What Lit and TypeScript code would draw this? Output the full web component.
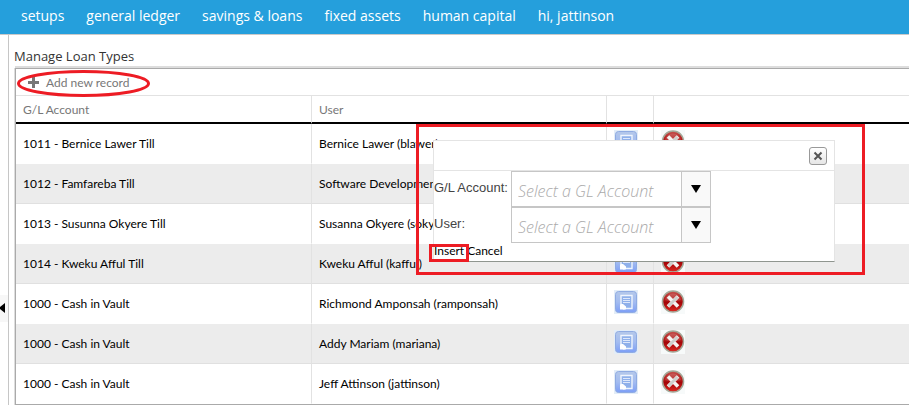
import { LitElement, html, css } from "lit";
import { customElement, property } from "lit/decorators.js";

interface Till {
  account: string;
  user: string;
}

const NAV = ["setups", "general ledger", "savings & loans", "fixed assets", "human capital", "hi, jattinson"];

const TILLS: Till[] = [
  { account: "1011 - Bernice Lawer Till", user: "Bernice Lawer (blawer)" },
  { account: "1012 - Famfareba Till", user: "Software Development" },
  { account: "1013 - Susunna Okyere Till", user: "Susanna Okyere (soky" },
  { account: "1014 - Kweku Afful Till", user: "Kweku Afful (kafful)" },
  { account: "1000 - Cash in Vault", user: "Richmond Amponsah (ramponsah)" },
  { account: "1000 - Cash in Vault", user: "Addy Mariam (mariana)" },
  { account: "1000 - Cash in Vault", user: "Jeff Attinson (jattinson)" },
];

@customElement("edit-icon")
export class EditIcon extends LitElement {
  static styles = css`
    :host { display: block; }
    svg { display: block; }
  `;
  render() {
    return html`<svg width="24" height="24" viewBox="0 0 24 24" aria-hidden="true">
      <defs>
        <linearGradient id="face" x1="0" y1="0" x2="0" y2="1">
          <stop offset="0" stop-color="#b4c8ea" />
          <stop offset="0.5" stop-color="#a3bcf0" />
          <stop offset="1" stop-color="#7c9ef6" />
        </linearGradient>
      </defs>
      <rect width="24" height="24" fill="#e3edf8" />
      <rect x="1.500" y="1.500" width="21" height="21" rx="3" fill="url(#face)" stroke="#8fabe2" />
      <path d="M7 14V5.500h11v13h-6" fill="#8fb0ea" stroke="#f0f5fd" stroke-width="1.400" />
      <path d="M9 8.500h7M9 10.500h7M9 12.500h7" stroke="#dde7fa" />
      <path d="M6 14h3l3 2.500V19.500H9z" fill="#fff" />
      <path d="M6 14v5.500h5z" fill="#fff" />
    </svg>`;
  }
}

@customElement("delete-icon")
export class DeleteIcon extends LitElement {
  static styles = css`
    :host { display: block; }
    svg { display: block; }
  `;
  render() {
    return html`<svg width="24" height="24" viewBox="0 0 24 24" aria-hidden="true">
      <defs>
        <linearGradient id="ball" x1="0" y1="0" x2="0" y2="1">
          <stop offset="0" stop-color="#c4524e" />
          <stop offset="0.45" stop-color="#b01414" />
          <stop offset="0.55" stop-color="#a30508" />
          <stop offset="1" stop-color="#dd2a22" />
        </linearGradient>
      </defs>
      <rect width="24" height="24" fill="#f7fafa" />
      <circle cx="12" cy="11.500" r="10.500" fill="url(#ball)" stroke="#a3a898" stroke-width="1.500" />
      <path d="M4 10a8.200 8.200 0 0 1 16 0q-8 3-16 0z" fill="#fff" opacity="0.14" />
      <path d="M7 6.500l10 10M17 6.500l-10 10" stroke="#f6f4f2" stroke-width="3.600" />
      <path d="M16.500 7l-9 9" stroke="#cfcfcc" stroke-width="2.800" />
    </svg>`;
  }
}

@customElement("account-picker")
export class AccountPicker extends LitElement {
  @property() label = "";
  static styles = css`
    :host { display: flex; height: 36px; }
    label {
      width: 77px;
      font: 13px/34px "Liberation Sans", Arial, sans-serif;
      color: #444;
      white-space: nowrap;
    }
    .combo {
      display: flex;
      position: relative;
      width: 200px;
      box-sizing: border-box;
      border: 1px solid #c6c6c6;
      background: #fff;
    }
    select {
      appearance: none;
      width: 100%;
      padding: 3px 36px 0 6px;
      border: 0;
      background: transparent;
      color: #aaa;
      font: italic 300 16px "Open Sans", sans-serif;
      outline: none;
    }
    .arrow {
      position: absolute;
      inset: 0 0 0 auto;
      width: 28px;
      display: grid;
      place-items: center;
      border-left: 1px solid #c6c6c6;
      background: #f9f9f9;
      pointer-events: none;
    }
  `;
  render() {
    return html`<label for="pick">${this.label}</label>
      <span class="combo">
        <select id="pick"><option>Select a GL Account</option></select>
        <span class="arrow"><svg width="10" height="8" viewBox="0 0 10 8"><path d="M0 0h10L5 8z" fill="#000" /></svg></span>
      </span>`;
  }
}

@customElement("insert-dialog")
export class InsertDialog extends LitElement {
  static styles = css`
    :host {
      display: block;
      box-sizing: border-box;
      width: 402px;
      height: 122px;
      background: #fff;
      border: 1px solid #e4e4e4;
      border-bottom-color: #8f958f;
      font-family: Lato, sans-serif;
    }
    header {
      display: flex;
      justify-content: flex-end;
      align-items: center;
      height: 29px;
      padding-right: 7px;
      border-bottom: 1px solid #e4e4e4;
    }
    .close {
      display: grid;
      place-items: center;
      width: 18px;
      height: 18px;
      padding: 0;
      border: 1px solid #999;
      border-radius: 3px;
      background: linear-gradient(#fff, #e6e6e6);
    }
    .actions { display: flex; gap: 3px; }
    .actions a {
      color: #000;
      font-size: 12px;
      line-height: 16px;
      text-decoration: none;
    }
  `;
  render() {
    return html`<header>
        <button class="close" aria-label="Close">
          <svg width="10" height="10" viewBox="0 0 10 10"><path d="M1.500 1.500l7 7M8.500 1.500l-7 7" stroke="#555" stroke-width="2" /></svg>
        </button>
      </header>
      <account-picker label="G/L Account:"></account-picker>
      <account-picker label="User:"></account-picker>
      <div class="actions"><a href="#insert">Insert</a><a href="#cancel">Cancel</a></div>`;
  }
}

@customElement("app-root")
export class AppRoot extends LitElement {
  static styles = css`
    :host {
      display: flex;
      flex-direction: column;
      min-height: 100vh;
      overflow: hidden;
      background: #fff;
      font-family: "Open Sans", sans-serif;
      position: relative;
    }
    nav {
      display: flex;
      gap: 22px;
      padding: 0 0 2px 21px;
      background: #259fdc;
      border-bottom: 1px solid #c9c9c9;
    }
    nav a {
      color: #fff;
      font-size: 14px;
      line-height: 32px;
      text-decoration: none;
      white-space: nowrap;
    }
    .body { display: flex; flex: 1; }
    .splitter {
      display: flex;
      align-items: center;
      width: 8px;
      border-right: 1px solid #c6c6c6;
    }
    .collapse {
      width: 8px;
      height: 27px;
      margin-top: 176px;
      padding: 0;
      border: 0;
      background: #f7f7f7;
      display: grid;
      place-items: center start;
    }
    main { flex: 1; min-width: 0; padding-left: 5px; }
    h1 {
      margin: 0;
      padding: 12px 0 0;
      font-size: 13px;
      font-weight: 400;
      line-height: 19px;
      color: #333;
    }
    .grid {
      border: solid #aaa;
      border-width: 1px 0 1px 1px;
      box-shadow: 0 -2px #ddd, -1px 0 #ddd;
      margin: 2px 0 0 1px;
      font-family: Lato, sans-serif;
    }
    .toolbar {
      display: flex;
      height: 26px;
      padding-left: 12px;
      border-bottom: 1px solid #e2e2e2;
    }
    .add {
      display: flex;
      align-items: center;
      gap: 7px;
      padding: 0;
      border: 0;
      background: none;
      color: #777;
      font: 12px Lato, sans-serif;
    }
    table {
      width: 100%;
      table-layout: fixed;
      border-spacing: 0;
    }
    .account { width: 296px; }
    .user { width: 295px; }
    .tool { width: 47px; }
    th, td {
      box-sizing: border-box;
      padding: 0 7px;
      border-right: 1px solid #e2e2e2;
      text-align: left;
      font-weight: 400;
      font-size: 12px;
      white-space: nowrap;
    }
    th:last-child, td:last-child { border-right: 0; }
    th {
      height: 28px;
      padding: 0 7px;
      border-bottom: 2px solid #000;
      color: #777;
    }
    td {
      height: 40px;
      color: #000;
      border-bottom: 1px solid #fff;
    }
    tr.alt td { background: #ececec; border-bottom-color: #e0e0e0; }
    td button {
      display: block;
      height: 24px;
      margin-bottom: 3px;
      padding: 0;
      border: 0;
      background: none;
    }
    .dialog { position: absolute; left: 433px; top: 140px; }
    .marks {
      position: absolute;
      left: 0;
      top: 0;
      pointer-events: none;
    }
  `;

  render() {
    return html`
      <nav>${NAV.map((item) => html`<a href="#">${item}</a>`)}</nav>
      <div class="body">
        <div class="splitter">
          <button class="collapse" aria-label="Collapse">
            <svg width="5" height="10" viewBox="0 0 5 10"><path d="M5 0v10L0 6V4z" /></svg>
          </button>
        </div>
        <main>
          <h1>Manage Loan Types</h1>
          <div class="grid">
            <div class="toolbar">
              <button class="add">
                <svg width="11" height="11" viewBox="0 0 11 11"><path d="M4 0h3v4h4v3H7v4H4V7H0V4h4z" fill="#777" /></svg>
                Add new record
              </button>
            </div>
            <table>
              <colgroup><col class="account" /><col class="user" /><col class="tool" /><col /></colgroup>
              <thead>
                <tr><th>G/L Account</th><th>User</th><th></th><th></th></tr>
              </thead>
              <tbody>
                ${TILLS.map(
                  (till, i) => html`<tr class=${i % 2 ? "alt" : ""}>
                    <td>${till.account}</td>
                    <td>${till.user}</td>
                    <td><button aria-label="Edit"><edit-icon></edit-icon></button></td>
                    <td><button aria-label="Delete"><delete-icon></delete-icon></button></td>
                  </tr>`
                )}
              </tbody>
            </table>
          </div>
        </main>
      </div>
      <insert-dialog class="dialog"></insert-dialog>
      <svg class="marks" width="909" height="405" viewBox="0 0 909 405" fill="none" stroke="#ed1c24" stroke-width="3">
        <ellipse cx="83.500" cy="83.500" rx="65" ry="12" />
        <rect x="417.500" y="125.500" width="446" height="148" />
        <rect x="430.500" y="245.500" width="37" height="15" />
      </svg>
    `;
  }
}
